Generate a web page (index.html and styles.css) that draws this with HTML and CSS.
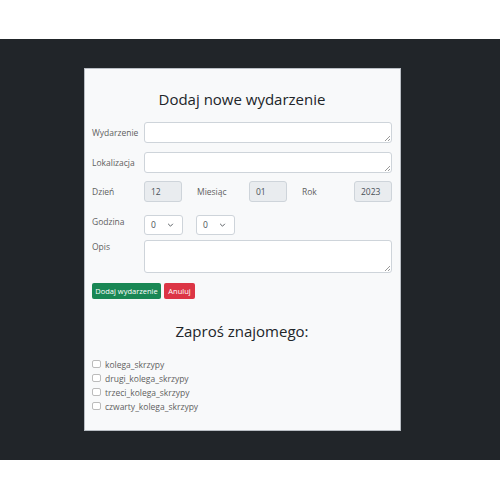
FILE: index.html
```html
<!DOCTYPE html>
<html lang="pl">
<head>
<meta charset="utf-8">
<title>Dodaj nowe wydarzenie</title>
<link rel="stylesheet" href="styles.css">
</head>
<body>
<div class="top"></div>
<main class="stage">
  <section class="card">
    <h1 class="title">Dodaj nowe wydarzenie</h1>
    <div class="row">
      <label class="lbl">Wydarzenie</label>
      <div class="area small"><span class="grip"></span></div>
    </div>
    <div class="row">
      <label class="lbl">Lokalizacja</label>
      <div class="area small"><span class="grip"></span></div>
    </div>
    <div class="row date">
      <label class="lbl">Dzień</label>
      <div class="num">12</div>
      <label class="lbl mid">Miesiąc</label>
      <div class="num">01</div>
      <label class="lbl mid">Rok</label>
      <div class="num">2023</div>
    </div>
    <div class="row hour">
      <label class="lbl top-lbl">Godzina</label>
      <div class="sel">0<svg viewBox="0 0 8 5" class="chev"><path d="M1 1l3 3 3-3" fill="none" stroke="#343a40" stroke-width="1"/></svg></div>
      <div class="sel">0<svg viewBox="0 0 8 5" class="chev"><path d="M1 1l3 3 3-3" fill="none" stroke="#343a40" stroke-width="1"/></svg></div>
    </div>
    <div class="row opis">
      <label class="lbl top-lbl">Opis</label>
      <div class="area big"><span class="grip"></span></div>
    </div>
    <div class="buttons">
      <button class="btn green">Dodaj wydarzenie</button>
      <button class="btn red">Anuluj</button>
    </div>
    <h2 class="subtitle">Zaproś znajomego:</h2>
    <ul class="friends">
      <li><span class="box"></span>kolega_skrzypy</li>
      <li><span class="box"></span>drugi_kolega_skrzypy</li>
      <li><span class="box"></span>trzeci_kolega_skrzypy</li>
      <li><span class="box"></span>czwarty_kolega_skrzypy</li>
    </ul>
  </section>
</main>
<div class="bottom"></div>
</body>
</html>
```
FILE: styles.css
```css
html, body {
  margin: 0;
  padding: 0;
  background: #fff;
  font-family: "Open Sans", "Noto Sans", sans-serif;
}
.top { height: 39px; }
.stage {
  background: #212529;
  height: 421px;
  padding-top: 29px;
  box-sizing: border-box;
}
.card {
  margin-left: 84px;
  width: 317px;
  height: 363px;
  box-sizing: border-box;
  background: #f8f9fa;
  border: 1px solid #b9bec4;
  padding: 0 8px 0 7px;
}
.title {
  margin: 19px 0 0;
  text-align: center;
  font-size: 15px;
  font-weight: 400;
  color: #212529;
  line-height: 22px;
  height: 34px;
}
.row {
  display: flex;
  align-items: center;
  margin-top: 9px;
}
.row:first-of-type { margin-top: 0; }
.lbl {
  width: 52px;
  flex: none;
  font-size: 8.5px;
  color: #5f5f5f;
  line-height: 10px;
}
.area {
  position: relative;
  flex: none;
  width: 248px;
  box-sizing: border-box;
  background: #fff;
  border: 1px solid #ced4da;
  border-radius: 3px;
}
.area.small { height: 21px; }
.area.big { height: 33px; }
.grip {
  position: absolute;
  right: 1px;
  bottom: 1px;
  width: 5px;
  height: 5px;
  background: linear-gradient(135deg, transparent 45%, #999 45%, #999 55%, transparent 55%, transparent 75%, #999 75%, #999 85%, transparent 85%);
}
.date { margin-top: 8px; }
.num {
  flex: none;
  width: 38px;
  height: 21px;
  box-sizing: border-box;
  background: #e9ecef;
  border: 1px solid #ced4da;
  border-radius: 3px;
  font-size: 8.5px;
  color: #495057;
  line-height: 19px;
  padding-left: 6px;
}
.lbl.mid { margin-left: 15px; }
.hour { margin-top: 13px; align-items: flex-start; }
.top-lbl { padding-top: 2px; }
.sel {
  position: relative;
  flex: none;
  width: 39px;
  height: 20px;
  box-sizing: border-box;
  background: #fff;
  border: 1px solid #ced4da;
  border-radius: 3px;
  font-size: 8.5px;
  color: #495057;
  line-height: 18px;
  padding-left: 6px;
  margin-right: 13px;
}
.chev {
  position: absolute;
  right: 8px;
  top: 7px;
  width: 7px;
  height: 4px;
}
.opis { margin-top: 5px; align-items: flex-start; }
.buttons {
  display: flex;
  gap: 3px;
  margin-top: 10px;
}
.btn {
  border: none;
  border-radius: 2px;
  font-family: inherit;
  font-size: 7.5px;
  color: #fff;
  height: 16px;
  padding: 0 2px;
  line-height: 16px;
}
.green { background: #198754; width: 69px; }
.red { background: #dc3545; width: 31px; }
.subtitle {
  margin: 22px 0 0;
  text-align: center;
  font-size: 15px;
  font-weight: 400;
  color: #212529;
  line-height: 20px;
}
.friends {
  list-style: none;
  margin: 16px 0 0;
  padding: 0;
}
.friends li {
  display: flex;
  align-items: center;
  height: 14px;
  font-size: 8.5px;
  color: #5f5f5f;
}
.box {
  width: 9px;
  height: 8px;
  box-sizing: border-box;
  border: 1px solid #bbb;
  border-radius: 2px;
  background: #fff;
  margin-right: 4px;
}
.bottom { height: 40px; }
```
